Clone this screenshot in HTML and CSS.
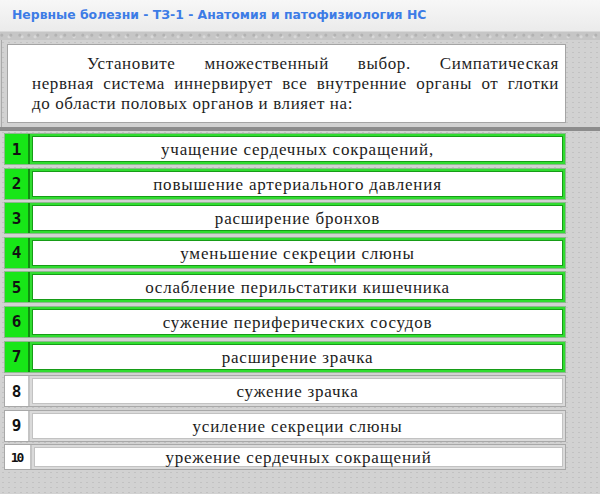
FILE: index.html
```html
<!DOCTYPE html>
<html lang="ru">
<head>
    <meta charset="UTF-8">
    <title>Нервные болезни - ТЗ-1</title>
    <link rel="stylesheet" href="styles.css">
</head>
<body>
    <div class="titlebar">Нервные болезни - ТЗ-1 - Анатомия и патофизиология НС</div>
    <div class="texture"></div>

    <div class="question-wrap">
        <div class="question">
            <span class="line full first">Установите множественный выбор. Симпатическая</span>
            <span class="line full">нервная система иннервирует все внутренние органы от глотки</span>
            <span class="line">до области половых органов и влияет на:</span>
        </div>
    </div>
    <div class="divider"></div>

    <div class="options">
        <div class="option selected"><span class="num">1</span><span class="text">учащение сердечных сокращений,</span></div>
        <div class="option selected"><span class="num">2</span><span class="text">повышение артериального давления</span></div>
        <div class="option selected"><span class="num">3</span><span class="text">расширение бронхов</span></div>
        <div class="option selected"><span class="num">4</span><span class="text">уменьшение секреции слюны</span></div>
        <div class="option selected"><span class="num">5</span><span class="text">ослабление перильстатики кишечника</span></div>
        <div class="option selected"><span class="num">6</span><span class="text">сужение периферических сосудов</span></div>
        <div class="option selected"><span class="num">7</span><span class="text">расширение зрачка</span></div>
        <div class="option"><span class="num">8</span><span class="text">сужение зрачка</span></div>
        <div class="option"><span class="num">9</span><span class="text">усиление секреции слюны</span></div>
        <div class="option last"><span class="num ten">10</span><span class="text">урежение сердечных сокращений</span></div>
    </div>
</body>
</html>
```

FILE: styles.css
```css
html, body {
    margin: 0;
    width: 600px;
    height: 494px;
    overflow: hidden;
}

body {
    font-family: "Liberation Serif", "DejaVu Serif", serif;
    background-color: #d2d2d2;
    background-image: radial-gradient(circle, #c2c2c2 0.7px, transparent 0.8px);
    background-size: 6px 5px;
}

.titlebar {
    height: 31px;
    line-height: 29px;
    padding-left: 12px;
    font-family: "DejaVu Sans", Verdana, sans-serif;
    font-weight: bold;
    font-size: 12.4px;
    color: #3d7ce6;
    background: linear-gradient(#f7f7f7, #ebebeb);
    border-bottom: 1px solid #d8d8d8;
}

.texture {
    height: 8px;
    background-color: #c6c6c6;
    background-image:
        radial-gradient(circle at 20% 40%, #b2b2b2 1px, transparent 2px),
        radial-gradient(circle at 70% 60%, #d8d8d8 1px, transparent 2px);
    background-size: 9px 8px, 13px 8px;
}

.question-wrap {
    padding: 4px 34px 4px 5px;
    border-left: 1px solid #a9a9a9;
    margin-left: 1px;
    height: 79px;
}

.question {
    box-sizing: border-box;
    height: 79px;
    background: white;
    border: 1px solid #a4a4a4;
    padding: 9px 6px 0 24px;
    font-size: 17px;
    line-height: 20px;
    letter-spacing: 0.6px;
    color: #1e1e1e;
}

/* each line is laid out on its own so the breaks stay put */
.line {
    display: block;
    white-space: nowrap;
}

.line.full {
    text-align: justify;
    text-align-last: justify;
}

.line.first {
    padding-left: 55px;
}

.divider {
    height: 4px;
    background-color: #8c8c8c;
}

.options {
    display: flex;
    flex-direction: column;
    gap: 2.6px;
    padding: 2px 34px 0 3px;
    margin-left: 1px;
}

.option {
    display: flex;
    height: 32px;
    box-sizing: border-box;
    border: 1px solid #a8a8a8;
    background: white;
}

.option.last {
    height: 26px;
}

.num {
    width: 23px;
    flex-shrink: 0;
    display: flex;
    align-items: center;
    justify-content: center;
    font-family: "DejaVu Sans Mono", monospace;
    font-weight: bold;
    font-size: 16px;
    color: #111;
    border-right: 2px solid #c4c4c4;
}

.num.ten {
    font-size: 13px;
    letter-spacing: -2px;
    padding-right: 2px;
}

.text {
    flex: 1;
    display: flex;
    align-items: center;
    justify-content: center;
    border: 2px solid #dadada;
    box-shadow: inset 0 0 0 1px #c2c2c2;
    font-size: 17px;
    letter-spacing: 0.8px;
    color: #1c1c1c;
    padding-top: 2px;
}

.option.selected {
    border-color: #8fb88f;
}

.option.selected .num {
    background-color: #17e617;
    border-right-color: #0f8f0f;
}

.option.selected .text {
    border-color: #30dd30;
    box-shadow: inset 0 0 0 1px #179c17;
}
```
